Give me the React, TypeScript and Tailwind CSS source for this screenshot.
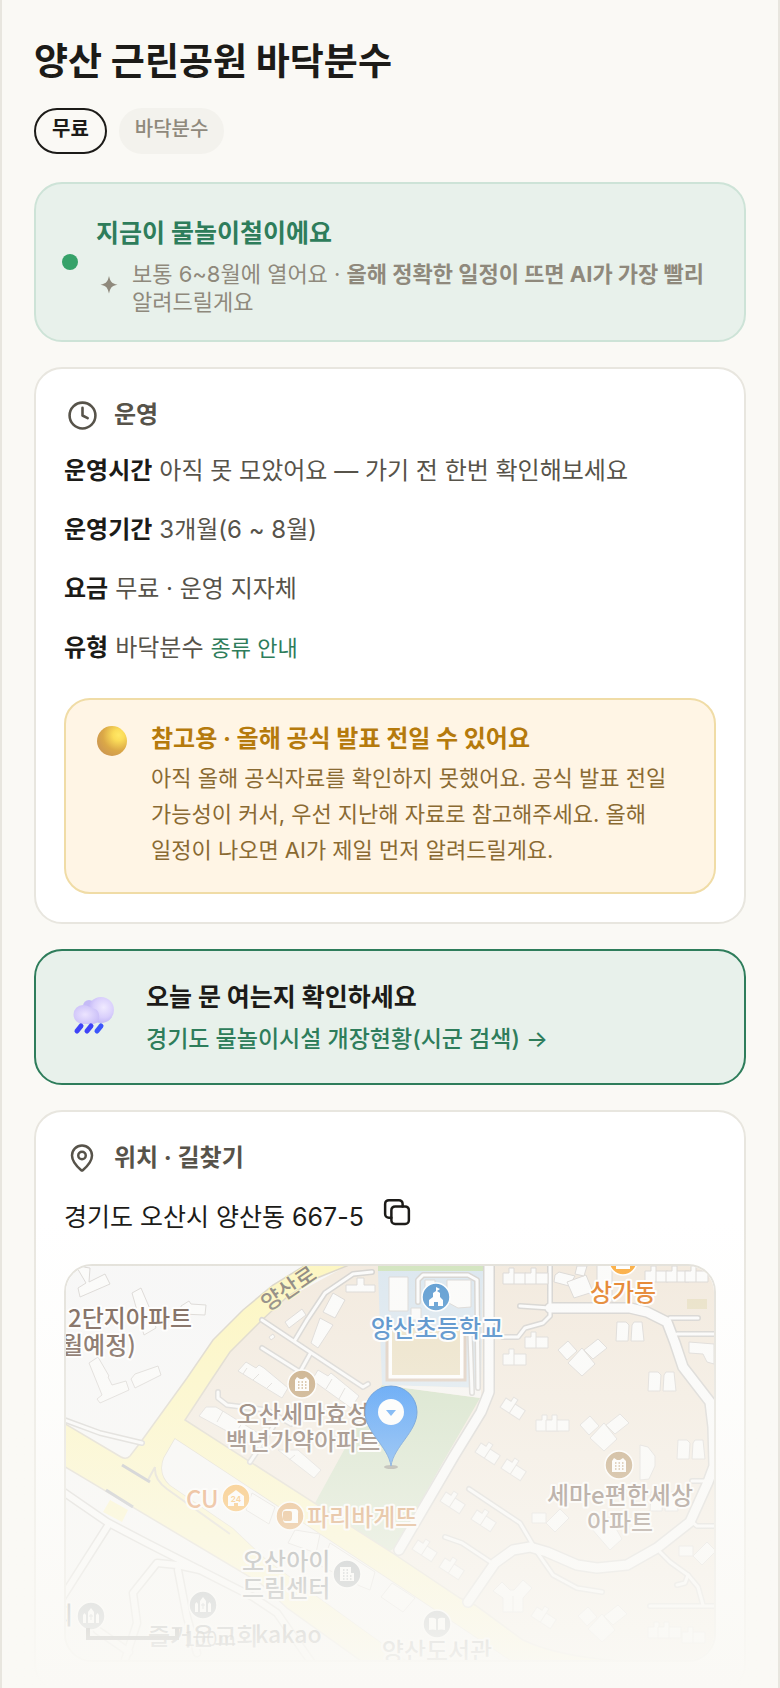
import type { ReactNode } from "react";
import { Clock, MapPin } from "lucide-react";

const infoRows = [
  { label: "운영시간", value: "아직 못 모았어요 — 가기 전 한번 확인해보세요" },
  { label: "운영기간", value: "3개월(6 ~ 8월)" },
  { label: "요금", value: "무료 · 운영 지자체" },
  { label: "유형", value: "바닥분수", link: "종류 안내" },
];

// White local roads, drawn twice: grey casing first, then the surface
const wideRoads = [
  "M423 -4V126L415 146L388 190L333 284",
  "M484 42L564 42L581 46L601 56L609 77L617 101L644 136L647 161L648 200L642 216L624 256L591 282L561 299L531 302L511 299L481 286L464 281L447 284L429 297L402 336",
];

const narrowRoads = [
  "M454 40L484 42V-4",
  "M437 71H452L459 62L477 57L484 50V42",
  "M604 52H632",
  "M611 68H652",
  "M403 223L454 257L467 279",
  "M379 271L396 277L426 297",
  "M471 286L487 309L511 322L536 326",
  "M594 286L604 296L622 309L632 321L637 339",
  "M622 309L619 317L611 319",
  "M584 340H652",
  "M626 256L631 260H652",
  "M626 215H642",
  "M196 54L244 86L297 121L302 118",
  "M229 74L241 54L259 27L287 8L306 6",
  "M196 82L234 106L244 88",
  "M152 126V132L161 139L201 144L225 158",
  "M184 196L207 161",
  "M-4 153L34 167L76 177",
  "M352 36V14L357 9H402L411 14L412 122",
  "M404 67L406 127",
];

const southRoads = [
  "M-4 225L41 256L81 277L134 304L187 331L211 347L248 400",
  "M43 258L-4 332",
  "M134 304L111 299L91 297L67 327L71 357L57 400",
  "M112 304L121 351L131 387",
  "M31 364L63 386",
];

const buildings = [
  "10,0 24,2 23,16 39,8 44,18 14,31 12,22 20,17",
  "66,27 75,22 84,43 90,62 78,69",
  "115,40 123,35 125,38 140,39 139,49 115,48",
  "23,97 32,91 43,110 42,111 46,119 60,115 63,124 34,137 31,133 36,129",
  "65,113 69,108 92,100 95,109 69,122",
  "219,56 236,43 240,49 223,62",
  "203,71 207,68 209,71 205,74",
  "267,27 279,34 269,52 257,46",
  "254,52 267,59 252,82 245,77",
  "280,19 291,19 291,12 298,12 298,19 309,19 309,26 280,26",
  "180,96 190,102 193,99 198,102 222,122 216,132 172,105",
  "150,141 160,147 200,172 194,183 133,150 140,141",
  "252,104 262,110 265,107 293,130 285,142 246,114",
  "212,184 232,184 255,204 248,212",
  "186,227 209,241 203,258 180,244",
  "229,264 254,268 250,287 222,277",
  "264,277 309,306 304,324 294,320 255,300",
  "326,317 349,332 337,346 315,331",
  "323,11 342,11 342,45 323,45",
  "381,14 405,14 405,41 392,42 381,36",
  "359,14 369,14 369,36 359,36",
  "345,42 355,42 355,54 345,54",
  "489,9 493,6 509,10 503,20 488,16",
  "501,16 520,9 527,26 508,32",
  "511,0 521,0 518,10 509,8",
  "574,179 582,181 589,190 589,200 583,213 574,214",
  "525,262 545,254 556,273 544,284",
  "531,-2 546,-2 546,36 531,36",
  "623,76 648,78 648,98 641,96 637,88 623,87",
];

// x, y, rotation of the low apartment blocks with a stair tower
const stepBlocks = [
  [437, 7, 0], [459, 7, 0], [459, 71, 0], [437, 88, 0],
  [470, 154, 0], [480, 154, 0], [579, 5, 0], [600, 5, 0], [619, 5, 0],
  [440, 132, 33], [415, 177, 33], [441, 193, 33],
  [380, 226, 33], [411, 244, 33], [352, 274, 33], [379, 292, 33],
  [471, 341, 33], [582, 361, 0], [592, 361, 0], [616, 366, 0],
];

const towers = [[492, 73], [514, 148], [512, 339]];
const twins = [[550, 56], [582, 106], [611, 174], [584, 226]];
const clusters = [[466, 243], [613, 276]];

const labels = [
  { x: 2, y: 61, text: "2단지아파트", fill: "#6b5346", anchor: "start" },
  { x: -5, y: 88, text: "월예정)", fill: "#6b5346", anchor: "start" },
  { x: 371, y: 71, text: "양산초등학교", fill: "#3a7fc4", anchor: "middle" },
  { x: 557, y: 35, text: "상가동", fill: "#e37a1c", anchor: "middle" },
  { x: 237, y: 157, text: "오산세마효성", fill: "#6b5346", anchor: "middle" },
  { x: 237, y: 184, text: "백년가약아파트", fill: "#6b5346", anchor: "middle" },
  { x: 554, y: 238, text: "세마e편한세상", fill: "#6b5346", anchor: "middle" },
  { x: 554, y: 265, text: "아파트", fill: "#6b5346", anchor: "middle" },
  { x: 120, y: 242, text: "CU", fill: "#e0813c", anchor: "start" },
  { x: 241, y: 260, text: "파리바게뜨", fill: "#cc7a33", anchor: "start" },
  { x: 176, y: 304, text: "오산아이", fill: "#5f6468", anchor: "start" },
  { x: 176, y: 331, text: "드림센터", fill: "#5f6468", anchor: "start" },
  { x: 82, y: 379, text: "즐거운교회", fill: "#5f6468", anchor: "start" },
  { x: 7, y: 358, text: "교회", fill: "#5f6468", anchor: "end" },
  { x: 371, y: 394, text: "양산도서관", fill: "#5f6468", anchor: "middle" },
] as const;

const Poi = ({ x, y, color, children }: { x: number; y: number; color: string; children?: ReactNode }) => (
  <g transform={`translate(${x} ${y})`}>
    <circle r="14" fill={color} stroke="#fff" strokeWidth="1.5" />
    {children}
  </g>
);

const Apartment = ({ dots }: { dots: string }) => (
  <>
    <path d="M-7 7V-4L-5 -7L-2 -5H1L4 -7L7 -4V7Z" fill="#fff" />
    <path d="M-4 -2H6M-4 1H6M-4 4H6" stroke={dots} strokeWidth="1.5" strokeDasharray="1.5 2" />
  </>
);

const Church = () => (
  <>
    <path d="M-8 7V-1L-6.5 -3L-5 -1V7ZM5 7V-1L6.5 -3L8 -1V7ZM-3 7V-4L0 -8L3 -4V7Z" fill="#fff" />
    <path d="M0 -2V4M-2 0H2" stroke="#9aa2a8" />
  </>
);

const MapView = () => (
  <svg
    viewBox="0 0 648 394"
    preserveAspectRatio="xMidYMid slice"
    className="block h-[394px] w-full"
    role="img"
    aria-label="양산 근린공원 지도"
  >
    <defs>
      <linearGradient id="pin" x1="0" y1="0" x2="0" y2="1">
        <stop offset="0" stopColor="#2788f7" />
        <stop offset="1" stopColor="#3a92f4" />
      </linearGradient>
    </defs>
    <rect width="648" height="394" fill="#f7f7f7" />

    {/* districts */}
    <path d="M284 -2L207 40L147 90L119 154L322 286L394 332L457 374L501 392L554 396H650V-2Z" fill="#f2e9dd" />
    <path d="M312 0H417V5H312Z" fill="#cfe3bb" />
    <path d="M312 5H417L415 122L316 119Z" fill="#dae6ef" />
    <path d="M316 119L414 132L377 196L329 282L322 286L249 237L289 164Z" fill="#cfdfc2" />
    <path d="M316 119L415 122V132Z" fill="#f6f4f1" />

    {/* main roads */}
    <g fill="#fdf6bd" stroke="#d9d3c5" strokeWidth="1.5">
      <path d="M243 -3L207 19L177 44L147 74L121 112L74 177L64 190Q60 194 55 191L-4 156V199L194 317L221 342L302 400H348L201 294L167 262L104 219Q92 208 98 192L109 173L334 321L452 400H660L554 395Q490 390 457 374L409 339L394 332L328 288L119 154L144 116L164 86L196 54L221 31L251 12L288 -3Z" />
      <path d="M44 234L62 244L56 256L37 246Z" stroke="none" />
    </g>
    <path d="M98 192L109 173L334 321L452 400H348L201 294L167 262L104 219Q92 208 98 192Z" fill="#f7f7f7" />
    <path d="M89 201L82 214M89 201Q88 214 101 223L164 268" fill="none" stroke="#d9d3c5" strokeWidth="2" />
    <path d="M56 199L84 216M40 224L67 241" stroke="#b0b2b8" strokeWidth="3" />

    {/* local roads */}
    <g fill="none" strokeLinejoin="round" strokeLinecap="round">
      <g stroke="#d3d1ce">
        {wideRoads.map((d) => <path key={d} d={d} strokeWidth="12" />)}
        {narrowRoads.map((d) => <path key={d} d={d} strokeWidth="6" />)}
        {southRoads.map((d) => <path key={d} d={d} strokeWidth="9" />)}
      </g>
      <g stroke="#fbfbfb">
        {wideRoads.map((d) => <path key={d} d={d} strokeWidth="9" />)}
        {narrowRoads.map((d) => <path key={d} d={d} strokeWidth="3" />)}
        {southRoads.map((d) => <path key={d} d={d} strokeWidth="6" />)}
      </g>
    </g>

    {/* playground and sand */}
    <rect x="321" y="62" width="78" height="52" fill="#fff" stroke="#dccabb" strokeWidth="3" />
    <rect x="326" y="62" width="68" height="47" fill="#ebe0c4" />
    <rect x="621" y="33" width="20" height="10" fill="#e8dfc3" />

    {/* buildings */}
    <g fill="#fbfbfa" stroke="#d9d6d3">
      {buildings.map((points) => <polygon key={points} points={points} />)}
      {stepBlocks.map(([x, y, r]) => (
        <path key={`${x}-${y}`} transform={`translate(${x} ${y}) rotate(${r})`} d="M0 0H6V-5H11V0H23V11H0ZM11 0V11" />
      ))}
      {towers.map(([x, y]) => (
        <path key={`${x}-${y}`} transform={`translate(${x} ${y})`} d="M0 11L10 2L19 12L9 21ZM26 11L40 0L49 9L35 20ZM10 24L24 9L37 25L24 37Z" />
      ))}
      {twins.map(([x, y]) => (
        <path key={`${x}-${y}`} transform={`translate(${x} ${y})`} d="M1 0H10L13 3L12 19H0ZM16 3L18 0H26L28 19H15Z" />
      ))}
      {clusters.map(([x, y]) => (
        <path key={`${x}-${y}`} transform={`translate(${x} ${y})`} d="M0 4H14V14H0ZM14 14L28 0L37 9L23 23Z" />
      ))}
      <path d="M427 325L436 316L444 324L448 324L457 314L466 322L457 332V346H437V332ZM447 330V346" />
    </g>
    <path d="M181 102L177 108M193 108L187 114M206 117L200 123M157 145L151 156M176 157L169 168M266 113L260 123M279 122L273 133M223 194L229 189" stroke="#d9d6d3" />

    {/* places */}
    <Poi x={236} y={118} color="#bd9a6b"><Apartment dots="#bd9a6b" /></Poi>
    <Poi x={553} y={199} color="#b38f5f"><Apartment dots="#b38f5f" /></Poi>
    <Poi x={370} y={31} color="#5295cf">
      <path d="M-7 9V3L-3 0V-4L0 -6V-10L4 -8L1 -6L4 -4V0L7 3V9H2V5H-2V9Z" fill="#fff" />
    </Poi>
    <Poi x={557} y={-5} color="#fbaa3a"><path d="M-7 -4H7V8H-7Z" fill="#fff" /></Poi>
    <Poi x={170} y={232} color="#f8a62e">
      <path d="M-8 8V-2L0 -8L8 -2V8H2V5H-2V8Z" fill="#fff" />
      <text y="4" textAnchor="middle" fontSize="8" fontWeight="700" fill="#f8a62e">24</text>
    </Poi>
    <Poi x={224} y={250} color="#dd9444">
      <path d="M-4 -7H5Q9 -7 8 -2V7H-4Q-7 7 -7 3Q-10 -6 -4 -7Z" fill="#fff" />
      <rect x="-7" y="-5" width="9" height="10" rx="2" fill="#dd9444" />
    </Poi>
    <Poi x={281} y={308} color="#8b949b">
      <path d="M-7 -7H4V-1H7V7H-7Z" fill="#fff" />
      <path d="M-4 -4H3M-4 -1H3M-4 2H6M-4 5H6" stroke="#8b949b" strokeWidth="1.5" strokeDasharray="1.5 2" />
    </Poi>
    <Poi x={137} y={339} color="#8b949b"><Church /></Poi>
    <Poi x={25} y={350} color="#8b949b"><Church /></Poi>
    <Poi x={371} y={358} color="#8b949b">
      <path d="M-8 -6Q-3 -7 -1 -5V6Q-4 5 -8 6ZM8 -6Q3 -7 1 -5V6Q4 5 8 6Z" fill="#fff" />
    </Poi>

    <g fontSize="24" fontWeight="500" stroke="#fff" strokeWidth="4" strokeLinejoin="round" paintOrder="stroke" className="font-['Noto_Sans_CJK_KR',sans-serif]">
      {labels.map((l) => (
        <text key={l.text} x={l.x} y={l.y} textAnchor={l.anchor} fill={l.fill}>{l.text}</text>
      ))}
      <text transform="translate(227 29) rotate(-34)" textAnchor="middle" fontSize="22" fill="#857f76" strokeWidth="2" stroke="#fdf6bd">양산로</text>
    </g>
    <g fill="#222" className="font-['Noto_Sans_CJK_KR',sans-serif]">
      <text x="118" y="380" fontSize="20" fillOpacity="0.7">100m</text>
      <text x="189" y="377" fontSize="23" fontWeight="500" fillOpacity="0.8">kakao</text>
    </g>
    <path d="M22 362V372H111V362" fill="none" stroke="#444" strokeWidth="4" />

    {/* pin */}
    <ellipse cx="325" cy="201" rx="7" ry="2" fill="#8c8c80" />
    <path d="M325 200C322 180 299 166 299 146A26 26 0 0 1 351 146C351 166 328 180 325 200Z" fill="url(#pin)" stroke="#2472cc" />
    <circle cx="325" cy="146" r="13" fill="#fff" />
    <path d="M320 144H330L325 150Z" fill="#3a92f4" />
  </svg>
);

const RainCloud = () => (
  <svg width="42" height="40" viewBox="0 0 42 40" aria-hidden="true">
    <defs>
      <radialGradient id="cloud-big" cx="0.6" cy="0.4" r="0.65">
        <stop offset="0" stopColor="#f0eaff" />
        <stop offset="0.6" stopColor="#d9cffc" />
        <stop offset="1" stopColor="#bdb2f5" />
      </radialGradient>
      <radialGradient id="cloud-small" cx="0.45" cy="0.5" r="0.6">
        <stop offset="0" stopColor="#ece4ff" />
        <stop offset="1" stopColor="#c9bef8" />
      </radialGradient>
    </defs>
    <circle cx="16" cy="9" r="6" fill="#c5bbf6" />
    <circle cx="28" cy="13" r="13" fill="url(#cloud-big)" />
    <path d="M10 8C15 8 18 11 22 12C28 14 28 27 20 27H10A9.5 9.5 0 0 1 10 8Z" fill="url(#cloud-small)" />
    <g stroke="#3f43f7" strokeWidth="5" strokeLinecap="round">
      <path d="M8 29L4 34" />
      <path d="M18 29L14 34" />
      <path d="M28 29L24 34" stroke="#3b55fb" />
    </g>
  </svg>
);

const CopyIcon = () => (
  <svg width="30" height="30" viewBox="0 0 24 24" fill="none" stroke="currentColor" strokeWidth="2" strokeLinecap="round" strokeLinejoin="round" aria-hidden="true">
    <rect x="7.5" y="7.5" width="14" height="14" rx="3" />
    <path d="M7.5 16.5H5.5A3 3 0 0 1 2.5 13.5V5.5A3 3 0 0 1 5.5 2.5H13.5A3 3 0 0 1 16.5 5.5V7.5" />
  </svg>
);

const CardHeading = ({ icon, children }: { icon: ReactNode; children: ReactNode }) => (
  <h2 className="mb-[18px] flex h-9 items-center gap-[14px] text-[24px] font-bold text-[#57534a]">
    <span className="flex w-9 justify-center">{icon}</span>
    {children}
  </h2>
);

const App = () => {
  const address = "경기도 오산시 양산동 667-5";

  return (
    <div className="relative h-screen overflow-hidden border-x-2 border-[#e8e6df] bg-[#faf9f5] font-[Inter,'Noto_Sans_CJK_KR',sans-serif] break-keep text-[#1c1b18]">
      <main className="flex flex-col gap-[25px] px-8 pt-[38px]">
        <header className="mb-[3px]">
          <h1 className="text-[37px] leading-[48px] font-bold">양산 근린공원 바닥분수</h1>
          <div className="mt-[22px] flex gap-3 text-[20px] leading-[38px]">
            <span className="rounded-full border-2 border-[#1c1b18] px-4 pb-1 font-bold">무료</span>
            <span className="rounded-full border-2 border-[#f3f2ed] bg-[#f3f2ed] px-[14px] pb-1 font-medium text-[#8f897c]">바닥분수</span>
          </div>
        </header>

        <section className="flex items-center gap-[18px] rounded-[28px] border-2 border-[#cde3d7] bg-[#e8f1eb] px-[26px] py-6">
          <span className="size-4 shrink-0 rounded-full bg-[#36a269]" />
          <div>
            <h2 className="text-[25px] leading-[50px] font-bold text-[#2e7d5b]">지금이 물놀이철이에요</h2>
            <div className="mt-[2px] flex items-center gap-[10px] text-[#8f897c]">
              <svg viewBox="0 0 26 26" className="size-[26px] shrink-0" fill="currentColor" aria-hidden="true">
                <path d="M13 1C14.5 7.2 15.5 8.2 21.5 9.7C15.5 11.2 14.5 12.2 13 18.5C11.5 12.2 10.5 11.2 4.5 9.7C10.5 8.2 11.5 7.2 13 1Z" />
              </svg>
              <p className="text-[22px] leading-7">
                보통 6~8월에 열어요 · <b>올해 정확한 일정이 뜨면 AI가 가장 빨리</b> 알려드릴게요
              </p>
            </div>
          </div>
        </section>

        <section className="rounded-[28px] border-2 border-[#e8e6df] bg-white p-7">
          <CardHeading icon={<Clock size={31} strokeWidth={2} />}>운영</CardHeading>
          <dl className="flex flex-col gap-[19px] text-[24px] leading-10">
            {infoRows.map((row) => (
              <div key={row.label} className="flex gap-[7px]">
                <dt className="font-bold">{row.label}</dt>
                <dd className="text-[#57534a]">
                  {row.value}
                  {row.link && <a href="#types" className="ml-[7px] text-[22px] text-[#2e7d5b]">{row.link}</a>}
                </dd>
              </div>
            ))}
          </dl>
          <aside className="mt-[30px] flex gap-[17px] rounded-[26px] border-2 border-[#f0dca6] bg-[#fff5e5] p-6">
            <span className="flex w-11 shrink-0 justify-center">
              <svg width="30" height="34" viewBox="0 0 30 34" aria-hidden="true">
                <defs>
                  <radialGradient id="coin" cx="0.72" cy="0.3" r="0.75">
                    <stop offset="0" stopColor="#ffe867" />
                    <stop offset="0.25" stopColor="#fbdc58" />
                    <stop offset="0.7" stopColor="#dba847" />
                    <stop offset="1" stopColor="#cf9a50" />
                  </radialGradient>
                </defs>
                <circle cx="15" cy="17" r="15" fill="url(#coin)" />
              </svg>
            </span>
            <div>
              <h3 className="text-[24px] leading-[30px] font-bold text-[#b57a0c]">참고용 · 올해 공식 발표 전일 수 있어요</h3>
              <p className="mt-[6px] text-[22px] leading-9 text-[#8a6a32]">
                아직 올해 공식자료를 확인하지 못했어요. 공식 발표 전일 가능성이 커서, 우선 지난해 자료로 참고해주세요. 올해 일정이 나오면 AI가 제일 먼저 알려드릴게요.
              </p>
            </div>
          </aside>
        </section>

        <a href="#status" className="flex items-center gap-5 rounded-[28px] border-2 border-[#2e7d5b] bg-[#e8f1eb] px-[26px] py-6">
          <span className="flex w-16 shrink-0 justify-center">
            <RainCloud />
          </span>
          <span className="flex flex-col">
            <strong className="text-[25px] leading-[44px] font-bold">오늘 문 여는지 확인하세요</strong>
            <span className="text-[23px] leading-10 font-medium text-[#2e7d5b]">경기도 물놀이시설 개장현황(시군 검색) →</span>
          </span>
        </a>

        <section className="rounded-[28px] border-2 border-[#e8e6df] bg-white p-7">
          <CardHeading icon={<MapPin size={30} strokeWidth={2} />}>위치 · 길찾기</CardHeading>
          <div className="flex h-12 items-center gap-[18px] text-[25px]">
            <span>{address}</span>
            <button type="button" aria-label="주소 복사" className="pb-3" onClick={() => navigator.clipboard?.writeText(address)}>
              <CopyIcon />
            </button>
          </div>
          <div className="mt-[22px] overflow-hidden rounded-[28px] border-2 border-[#e2e0d9]">
            <MapView />
          </div>
        </section>
      </main>

      {/* fade-out over the rest of the page */}
      <div className="pointer-events-none absolute inset-x-0 bottom-0 h-[468px] bg-linear-to-b from-[#faf9f5]/0 to-[#faf9f5]" />
    </div>
  );
};

export default App;
